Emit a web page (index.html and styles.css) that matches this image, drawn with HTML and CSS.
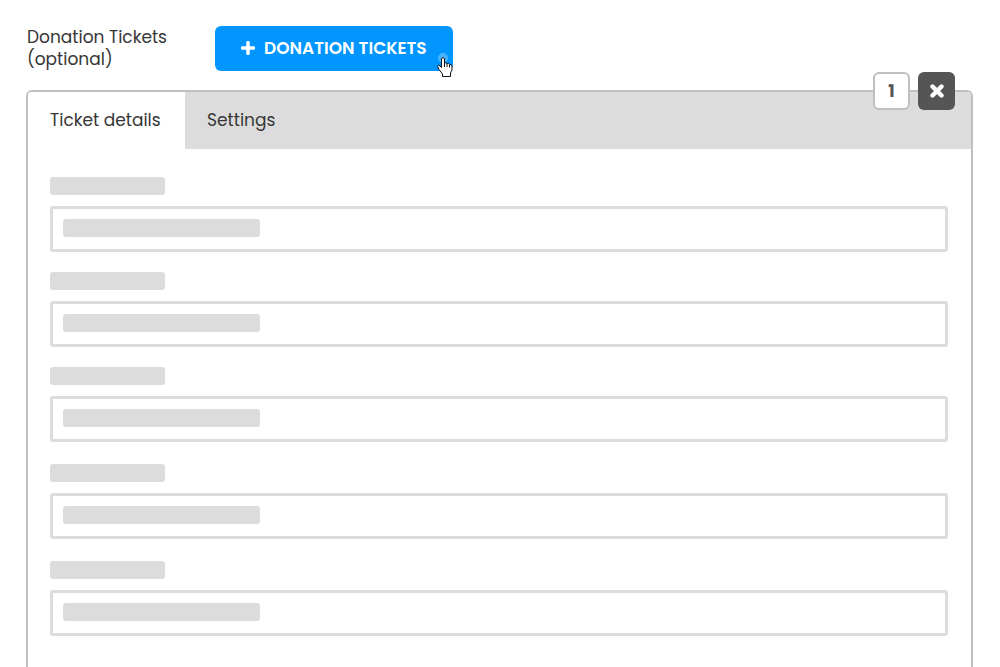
FILE: index.html
```html
<!DOCTYPE html>
<html lang="en">
<head>
<meta charset="utf-8">
<meta name="viewport" content="width=device-width, initial-scale=1">
<title>Donation Tickets</title>
<link rel="stylesheet" href="styles.css">
</head>
<body>
<main class="page">
  <header class="top">
    <p class="top-label">Donation Tickets<br>(optional)</p>
    <div class="add-wrap">
      <button class="add" type="button">
        <svg class="plus" viewBox="0 0 14 14" aria-hidden="true"><path d="M7 1.500v11M1.500 7h11" stroke="#fff" stroke-width="3.400" stroke-linecap="round"/></svg>
        <span>DONATION TICKETS</span>
      </button>
      <svg class="cursor" viewBox="0 0 18 26" aria-hidden="true">
        <circle cx="8" cy="6" r="5" fill="#fff" fill-opacity=".28"/>
        <path d="M6.500 6.500q1.500-1.700 3 0V11q1.500-1 2.500.7 1.500-.9 2.500.8 2-.6 2.500 1.500v4L15.500 21v3.500h-8V22L4 17.500 2.500 14q1-1.500 2.500 0l1.500 1.500z" fill="#fff" stroke="#111" stroke-linejoin="round"/>
        <path d="M9.500 10.500V15M12 12v3M14.500 13v2.500" fill="none" stroke="#111"/>
      </svg>
    </div>
  </header>
  <section class="panel">
    <div class="panel-actions">
      <span class="count">1</span>
      <button class="remove" type="button" aria-label="Remove ticket">
        <svg class="cross" viewBox="0 0 14 14" aria-hidden="true"><path d="M2.500 2.500l9 9M11.500 2.500l-9 9" stroke="#fff" stroke-width="4.400" stroke-linecap="round"/></svg>
      </button>
    </div>
    <nav class="tabs" role="tablist">
      <button class="tab tab-active" type="button" role="tab" aria-selected="true">Ticket details</button>
      <button class="tab" type="button" role="tab" aria-selected="false">Settings</button>
    </nav>
    <form class="fields">
      <div class="field"><label class="bar bar-label" for="f1"></label><div class="box"><input class="input" id="f1" type="text"><span class="bar bar-value"></span></div></div>
      <div class="field"><label class="bar bar-label" for="f2"></label><div class="box"><input class="input" id="f2" type="text"><span class="bar bar-value"></span></div></div>
      <div class="field"><label class="bar bar-label" for="f3"></label><div class="box"><input class="input" id="f3" type="text"><span class="bar bar-value"></span></div></div>
      <div class="field field-loose"><label class="bar bar-label" for="f4"></label><div class="box"><input class="input" id="f4" type="text"><span class="bar bar-value"></span></div></div>
      <div class="field field-loose"><label class="bar bar-label" for="f5"></label><div class="box"><input class="input" id="f5" type="text"><span class="bar bar-value"></span></div></div>
    </form>
  </section>
</main>
</body>
</html>
```

FILE: styles.css
```css
* { box-sizing: border-box; }

body {
  margin: 0;
  background: #fff;
  color: #363636;
  font-family: Poppins, Inter, "Open Sans", sans-serif;
  font-size: 17px;
  line-height: 22px;
}

button { font: inherit; color: inherit; border: 0; cursor: pointer; }

.page {
  display: flex;
  flex-direction: column;
  height: 100vh;
  overflow: hidden;
  padding: 26px 27px 0 26px;
}

.top { display: flex; align-items: flex-start; margin-bottom: 19px; }
.top-label { flex: 0 0 189px; margin: 0; padding-left: 1px; }

.add-wrap { position: relative; }
.add {
  display: flex;
  align-items: center;
  gap: 9px;
  height: 45px;
  padding: 0 26px 1px;
  border-radius: 6px;
  background: #0095ff;
  color: #fff;
  font-weight: 600;
  white-space: nowrap;
}
.plus { width: 14px; height: 14px; }
.cursor { position: absolute; right: 0; bottom: -7px; width: 18px; height: 26px; }

.panel {
  position: relative;
  flex: 1;
  border: 2px solid #bfbfbf;
  border-bottom: 0;
  border-radius: 6px 6px 0 0;
}

.panel-actions {
  position: absolute;
  top: -20px;
  right: 16px;
  display: flex;
  gap: 8px;
}
.count, .remove {
  display: flex;
  align-items: center;
  justify-content: center;
  width: 37px;
  height: 38px;
  border-radius: 6px;
}
.count { background: #fff; border: 2px solid #bfbfbf; color: #555; font-weight: 700; }
.remove { background: #555; padding: 0; }
.cross { width: 14px; height: 14px; }

.tabs { display: flex; height: 57px; background: #dcdcdc; border-radius: 4px 4px 0 0; }
.tab { padding: 0 22px 2px; background: none; text-align: left; white-space: nowrap; }
.tab-active { flex: 0 0 157px; background: #fff; border-radius: 4px 0 0 0; }

.fields { padding: 28px 23px 20px 22px; }
.field + .field { margin-top: 20px; }
.field + .field-loose { margin-top: 22px; }
.bar { display: block; height: 18px; border-radius: 3px; background: #dcdcdc; }
.bar-label { width: 115px; margin-bottom: 11px; }
.box { position: relative; }
.input {
  display: block;
  width: 100%;
  height: 46px;
  padding: 0 10px;
  border: 3px solid #dcdcdc;
  border-radius: 3px;
  background: #fff;
  font: inherit;
}
.bar-value { position: absolute; top: 13px; left: 13px; width: 197px; pointer-events: none; }
```
